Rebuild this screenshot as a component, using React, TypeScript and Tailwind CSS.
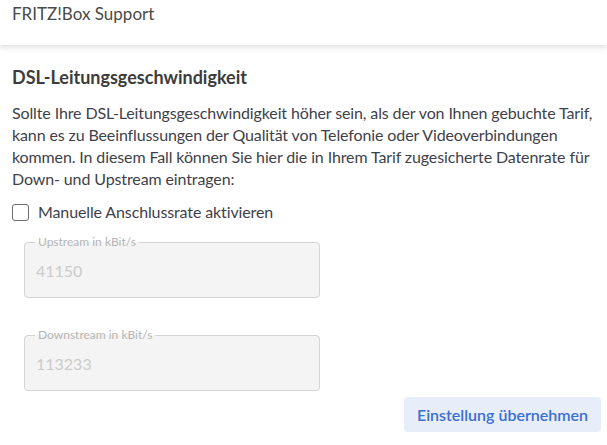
import React from "react";

function Field({ label, value }: { label: string; value: string }) {
  return (
    <fieldset className="ml-6 w-[296px] h-[63px] rounded-[4px] border border-[#d4d4d4] bg-[#f4f4f4] px-[10px] pb-0">
      <legend className="px-[3px] text-[12px] leading-[14px] text-[#b4b4b4]">{label}</legend>
      <div className="pl-[1px] pt-[12px] text-[16px] leading-[20px] text-[#cbcbcb]">{value}</div>
    </fieldset>
  );
}

export default function App() {
  return (
    <div className="w-[607px] h-[445px] bg-white overflow-hidden text-[#3f3f46]" style={{ fontFamily: "Lato, 'Noto Sans', sans-serif" }}>
      <div className="h-[45px] px-3 pt-[3px] text-[17px] leading-[22px] text-[#4a4a4a] shadow-[0_2px_6px_rgba(0,0,0,0.14)] relative">
        FRITZ!Box Support
      </div>
      <div className="px-3 pt-[21px]">
        <h2 className="text-[18px] font-bold leading-[22px] text-[#3c3c3c]">DSL-Leitungsgeschwindigkeit</h2>
        <p className="mt-[14px] text-[16px] leading-[22px] text-[#3f3f4a] tracking-[-0.12px] whitespace-nowrap">
          Sollte Ihre DSL-Leitungsgeschwindigkeit höher sein, als der von Ihnen gebuchte Tarif,
          <br />
          kann es zu Beeinflussungen der Qualität von Telefonie oder Videoverbindungen
          <br />
          kommen. In diesem Fall können Sie hier die in Ihrem Tarif zugesicherte Datenrate für
          <br />
          Down- und Upstream eintragen:
        </p>
        <label className="mt-[11px] flex items-center gap-[9px] text-[16px] leading-[22px] text-[#3f3f4a] tracking-[-0.12px]">
          <span className="h-[17px] w-[17px] rounded-[3px] border-[1.5px] border-[#6b6b6b] bg-white"></span>
          Manuelle Anschlussrate aktivieren
        </label>
      </div>
      <div className="mt-[12px]">
        <Field label="Upstream in kBit/s" value="41150" />
      </div>
      <div className="mt-[30px]">
        <Field label="Downstream in kBit/s" value="113233" />
      </div>
      <div className="mt-[6px] flex justify-end pr-[6px]">
        <button className="h-[35px] w-[197px] rounded-[4px] bg-[#e7eef9] text-[16px] font-semibold text-[#3a6fd4]">
          Einstellung übernehmen
        </button>
      </div>
    </div>
  );
}
